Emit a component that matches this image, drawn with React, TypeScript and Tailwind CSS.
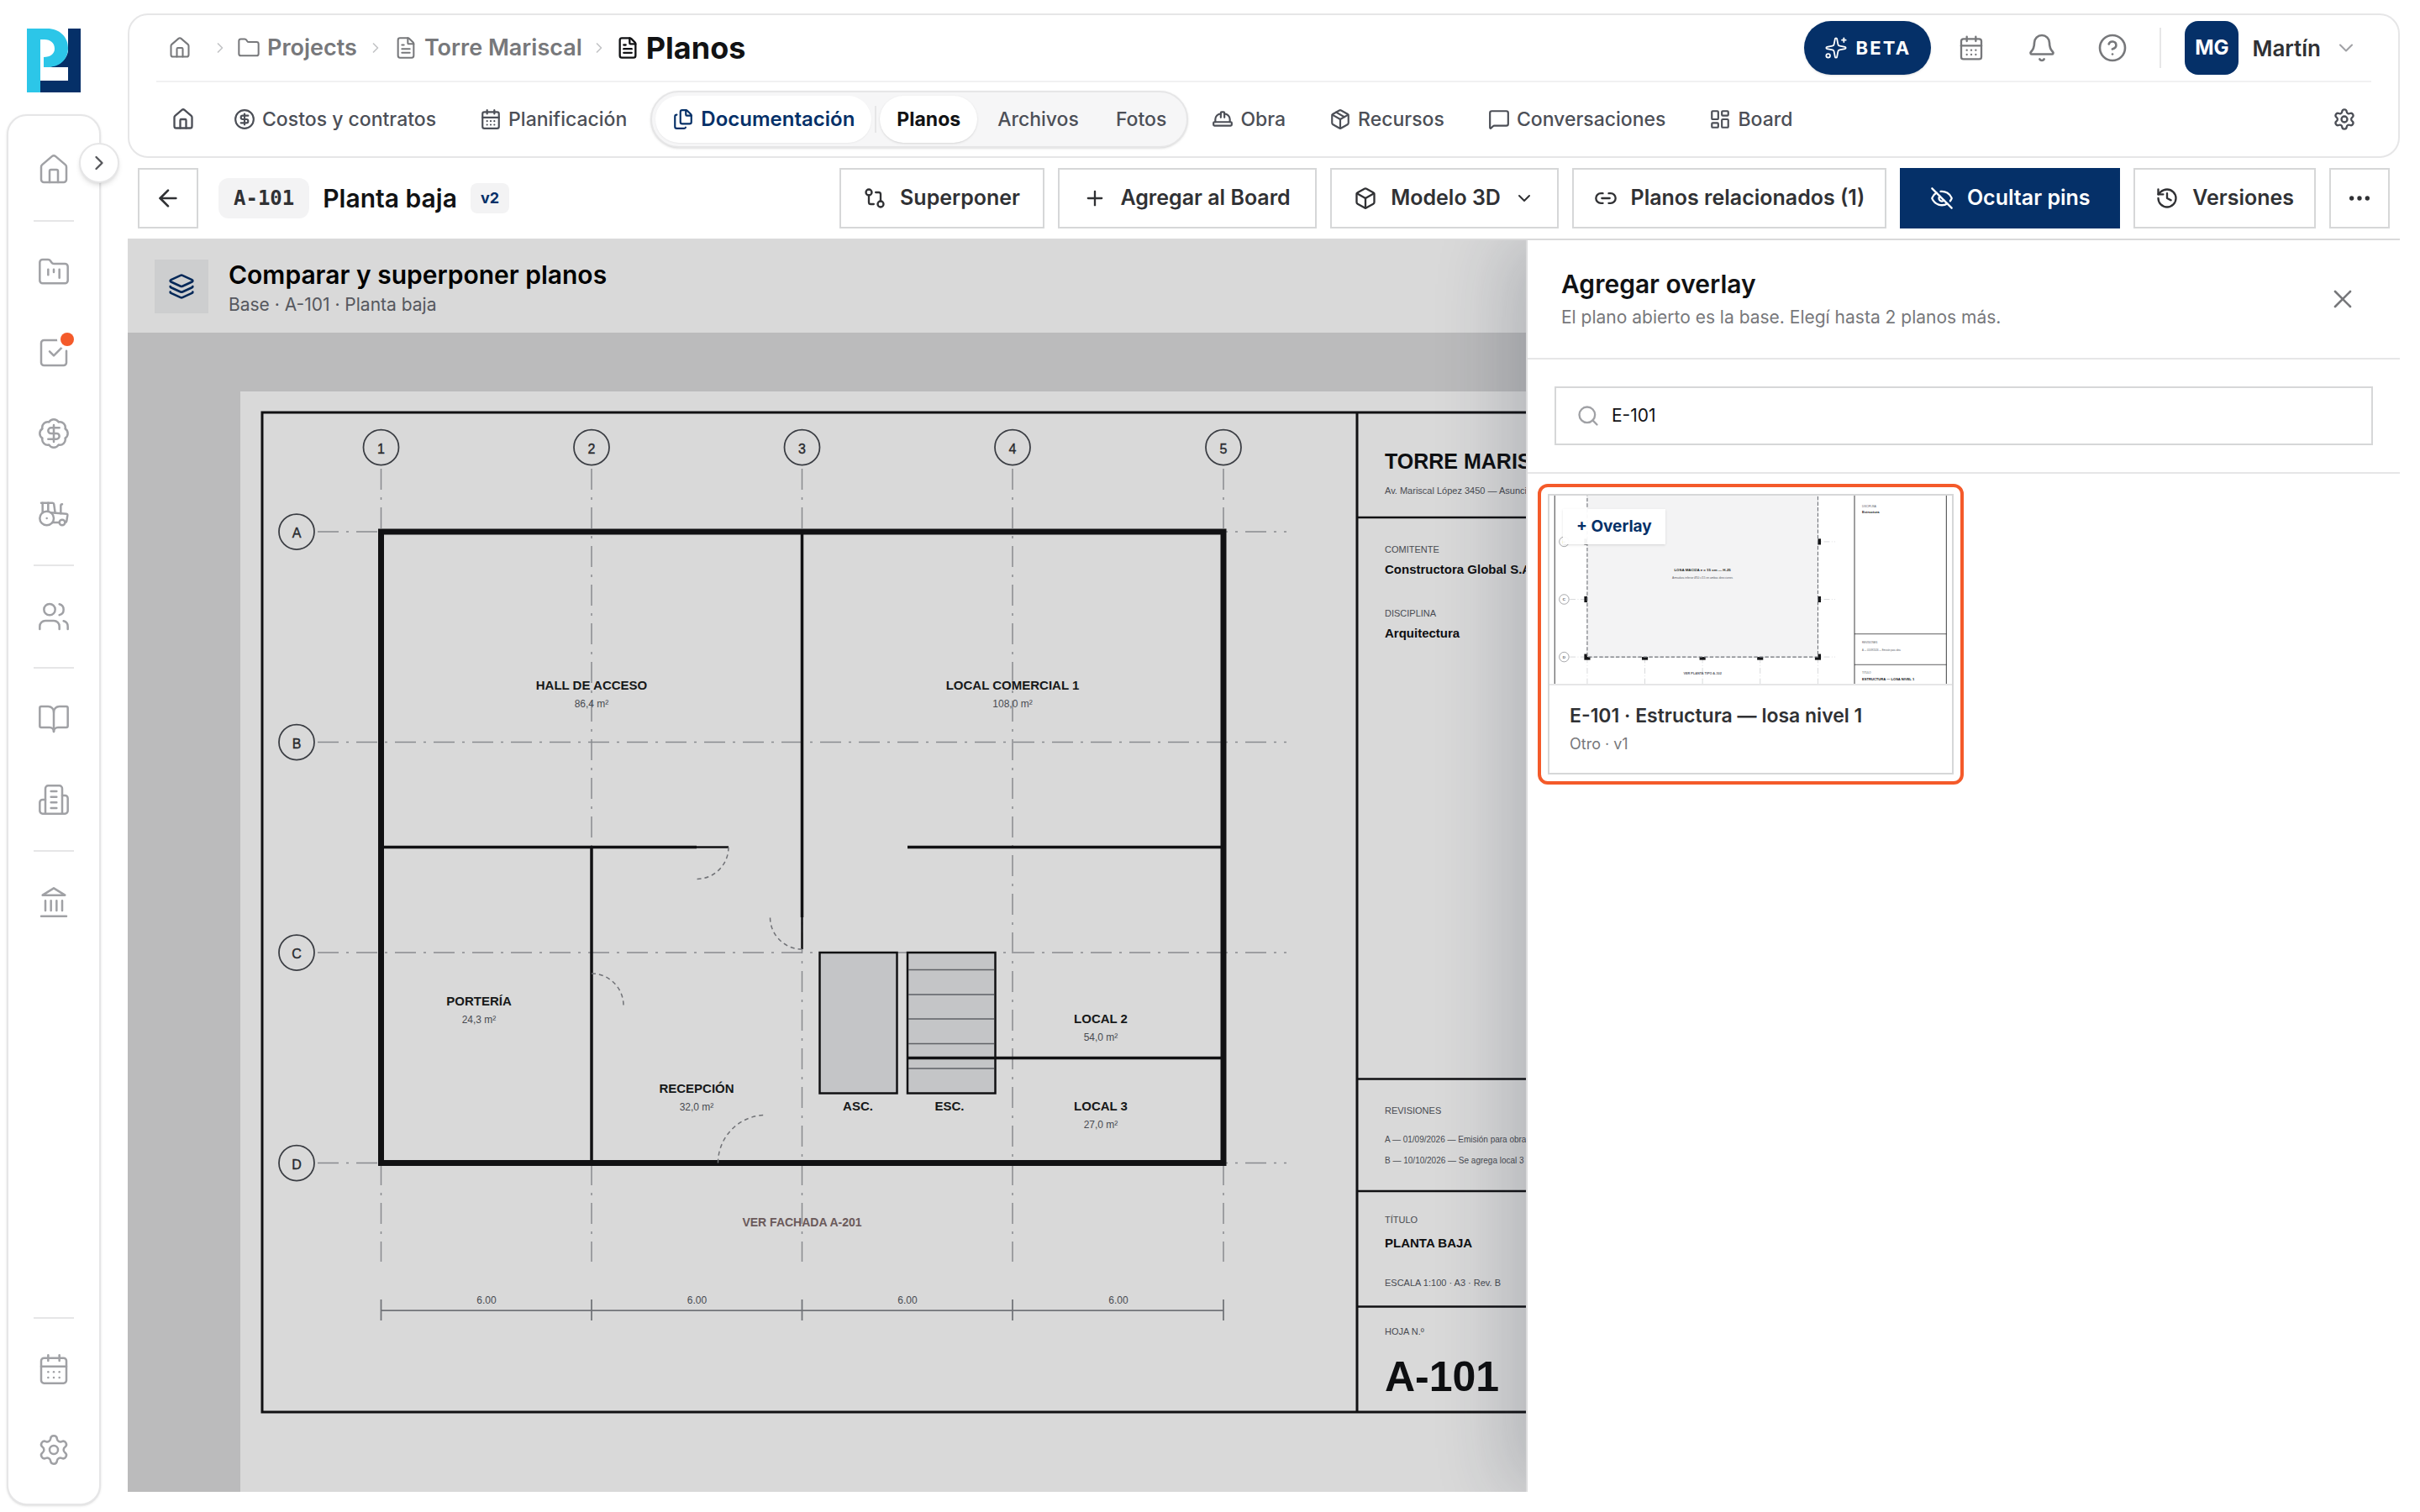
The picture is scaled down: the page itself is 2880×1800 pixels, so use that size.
import type { ComponentType, ReactNode } from "react";
import {
  ArrowLeft,
  BadgeDollarSign,
  Bell,
  BookOpen,
  Box,
  CalendarDays,
  ChevronDown,
  ChevronRight,
  CircleDollarSign,
  CircleQuestionMark,
  Ellipsis,
  EyeOff,
  FileText,
  Files,
  Folder,
  FolderKanban,
  GitCompare,
  HardHat,
  History,
  House,
  Layers,
  LayoutDashboard,
  Link2,
  MessageSquare,
  Package,
  Plus,
  Search,
  Settings,
  Sparkles,
  SquareCheckBig,
  Tractor,
  Users,
  X,
} from "lucide-react";

type IconType = ComponentType<{ className?: string; strokeWidth?: number }>;

/* ---------- Icons that lucide draws differently ---------- */

const BuildingIcon: IconType = ({ className, strokeWidth = 2 }) => (
  <svg className={className} viewBox="0 0 24 24" fill="none" stroke="currentColor" strokeWidth={strokeWidth} strokeLinecap="round" strokeLinejoin="round">
    <path d="M6 22V4a2 2 0 0 1 2-2h8a2 2 0 0 1 2 2v18Z" />
    <path d="M6 12H4a2 2 0 0 0-2 2v6a2 2 0 0 0 2 2h2" />
    <path d="M18 9h2a2 2 0 0 1 2 2v9a2 2 0 0 1-2 2h-2" />
    <path d="M10 6h4M10 10h4M10 14h4M10 18h4" />
  </svg>
);

const BankIcon: IconType = ({ className, strokeWidth = 2 }) => (
  <svg className={className} viewBox="0 0 24 24" fill="none" stroke="currentColor" strokeWidth={strokeWidth} strokeLinecap="round" strokeLinejoin="round">
    <path d="M3 22h18M6 18v-7M10 18v-7M14 18v-7M18 18v-7" />
    <path d="m12 2 8 5H4z" />
  </svg>
);

const Logo = () => (
  <svg className="h-19 w-16" viewBox="0 0 64 76">
    <path fill="#053068" d="M49 0h15v76H16V62h33V46H26C38 44 47 38 49 27z" />
    <path fill="#2cc6e8" d="M0 0h24c15 0 25 10 25 23 0 14-10 23-25 23h-4V34c8 0 13-4 13-10 0-7-5-11-12-11h-5v63H0z" />
  </svg>
);

/* ---------- Sidebar ---------- */

const sidebarGroups: { icon: IconType; label: string; badge?: boolean }[][] = [
  [{ icon: House, label: "Inicio" }],
  [
    { icon: FolderKanban, label: "Proyectos" },
    { icon: SquareCheckBig, label: "Tareas", badge: true },
    { icon: BadgeDollarSign, label: "Costos" },
    { icon: Tractor, label: "Equipos" },
  ],
  [{ icon: Users, label: "Contactos" }],
  [
    { icon: BookOpen, label: "Catálogo" },
    { icon: BuildingIcon, label: "Empresa" },
  ],
  [{ icon: BankIcon, label: "Bancos" }],
];

const SidebarItem = ({ icon: Icon, label, badge }: { icon: IconType; label: string; badge?: boolean }) => (
  <a href="#" aria-label={label} className="flex h-22 w-22 items-center justify-center text-[#a0a1a5]">
    <span className="relative">
      <Icon className="h-10 w-10" strokeWidth={1.5} />
      {badge && <span className="absolute -top-1 -right-1 h-4 w-4 rounded-full bg-[#f45a2a] ring-4 ring-white" />}
    </span>
  </a>
);

const SidebarDivider = () => <div className="my-2 h-0.5 w-12 bg-[#e6e6e7]" />;

const Sidebar = () => (
  <div className="flex w-30 shrink-0 flex-col pb-2 pl-2">
    <a href="#" aria-label="Inicio" className="flex h-34 items-center pt-2 pl-6">
      <Logo />
    </a>
    <aside className="relative flex flex-1 flex-col items-center gap-2 rounded-3xl border-2 border-[#e6e6e7] bg-white py-5 shadow-sm">
      {sidebarGroups.map((group, i) => (
        <div key={i} className="flex flex-col items-center gap-2">
          {i > 0 && <SidebarDivider />}
          {group.map((item) => (
            <SidebarItem key={item.label} {...item} />
          ))}
        </div>
      ))}
      <div className="mt-auto flex flex-col items-center gap-2">
        <SidebarDivider />
        <SidebarItem icon={CalendarDays} label="Calendario" />
        <SidebarItem icon={Settings} label="Configuración" />
      </div>
      <button
        type="button"
        aria-label="Expandir menú"
        className="absolute top-8 -right-6 flex h-12 w-12 items-center justify-center rounded-full border-2 border-[#e6e6e7] bg-white text-[#55565a] shadow-md"
      >
        <ChevronRight className="h-7 w-7" strokeWidth={2} />
      </button>
    </aside>
  </div>
);

/* ---------- Header ---------- */

const Breadcrumbs = () => (
  <nav aria-label="Ruta" className="flex items-center text-[27px] font-semibold text-[#77787b]">
    <a href="#" aria-label="Inicio" className="pr-6 pl-3.5">
      <House className="h-7 w-7" strokeWidth={1.75} />
    </a>
    <ChevronRight className="h-5 w-5 text-[#c3c4c6]" />
    <a href="#" className="ml-2.5 flex items-center gap-2">
      <Folder className="h-7 w-7" strokeWidth={1.75} />
      Projects
    </a>
    <ChevronRight className="mx-3 h-5 w-5 text-[#c3c4c6]" />
    <a href="#" className="flex items-center gap-2">
      <FileText className="h-7 w-7" strokeWidth={1.75} />
      Torre Mariscal
    </a>
    <ChevronRight className="mx-2.5 h-5 w-5 text-[#c3c4c6]" />
    <h1 className="flex items-center gap-2 text-4xl font-bold text-[#111214]">
      <FileText className="h-7 w-7" strokeWidth={2} />
      Planos
    </h1>
  </nav>
);

const HeaderActions = () => (
  <div className="flex items-center">
    <button type="button" className="mr-3 flex h-16 items-center gap-2.5 rounded-full bg-[#053068] px-6 text-[22px] font-bold tracking-widest text-white shadow-sm">
      <Sparkles className="h-7 w-7" strokeWidth={1.5} />
      BETA
    </button>
    <div className="flex gap-3 text-[#77787b]">
      <button type="button" aria-label="Calendario" className="flex h-18 w-18 items-center justify-center">
        <CalendarDays className="h-8 w-8" strokeWidth={1.75} />
      </button>
      <button type="button" aria-label="Notificaciones" className="flex h-18 w-18 items-center justify-center">
        <Bell className="h-9 w-9" strokeWidth={1.75} />
      </button>
      <button type="button" aria-label="Ayuda" className="flex h-18 w-18 items-center justify-center">
        <CircleQuestionMark className="h-9 w-9" strokeWidth={1.75} />
      </button>
    </div>
    <div className="mx-5 h-12 w-0.5 bg-[#e6e6e7]" />
    <button type="button" className="flex items-center gap-4 px-2 pr-4 text-[26px] font-semibold text-[#303134]">
      <span className="flex h-16 w-16 items-center justify-center rounded-2xl bg-[#053068] text-2xl font-bold text-white">MG</span>
      Martín
      <ChevronDown className="h-7 w-7 text-[#a0a1a5]" strokeWidth={1.75} />
    </button>
  </div>
);

const NavLink = ({ icon: Icon, children }: { icon: IconType; children: ReactNode }) => (
  <a href="#" className="flex h-14 items-center gap-2 px-6">
    <Icon className="h-[26px] w-[26px]" strokeWidth={2} />
    {children}
  </a>
);

const ProjectNav = () => (
  <nav aria-label="Proyecto" className="flex h-[88px] items-center text-[23px] font-medium text-[#4c4f57]">
    <div className="flex flex-1 items-center gap-1">
      <a href="#" aria-label="Resumen" className="px-[18px]">
        <House className="h-7 w-7" strokeWidth={2} />
      </a>
      <NavLink icon={CircleDollarSign}>Costos y contratos</NavLink>
      <NavLink icon={CalendarDays}>Planificación</NavLink>
      <div className="flex items-center gap-1 rounded-full border-2 border-[#e6e6e7] bg-[#f6f6f7] p-1 shadow-sm">
        <a href="#" className="flex h-14 items-center gap-2 rounded-full bg-white px-5 text-2xl font-semibold text-[#053068] shadow-xs">
          <Files className="h-[26px] w-[26px]" strokeWidth={2} />
          Documentación
        </a>
        <div className="h-8 w-0.5 bg-[#e6e6e7]" />
        <a href="#" className="flex h-14 items-center rounded-full bg-white px-5 font-bold text-[#111214] shadow-sm">Planos</a>
        <a href="#" className="flex h-14 items-center px-5">Archivos</a>
        <a href="#" className="flex h-14 items-center px-5">Fotos</a>
      </div>
      <NavLink icon={HardHat}>Obra</NavLink>
      <NavLink icon={Package}>Recursos</NavLink>
      <NavLink icon={MessageSquare}>Conversaciones</NavLink>
      <NavLink icon={LayoutDashboard}>Board</NavLink>
    </div>
    <a href="#" aria-label="Ajustes del proyecto" className="px-[18px]">
      <Settings className="h-7 w-7" strokeWidth={2} />
    </a>
  </nav>
);

const Header = () => (
  <header className="rounded-3xl border-2 border-[#e6e6e7] bg-white px-8">
    <div className="flex h-20 items-center justify-between border-b-2 border-[#f1f1f2]">
      <Breadcrumbs />
      <HeaderActions />
    </div>
    <ProjectNav />
  </header>
);

/* ---------- Toolbar ---------- */

const ToolButton = ({
  icon: Icon,
  children,
  menu,
  active,
  width = "",
}: {
  icon: IconType;
  children: ReactNode;
  menu?: boolean;
  active?: boolean;
  width?: string;
}) => (
  <button
    type="button"
    className={`flex h-18 items-center justify-center gap-4 border-2 text-[25px] font-semibold ${width} ${
      active ? "border-[#053068] bg-[#053068] px-8 text-white" : "border-[#d6d7d8] bg-white px-6 text-[#303134]"
    }`}
  >
    <Icon className="h-7 w-7" strokeWidth={2} />
    {children}
    {menu && <ChevronDown className="h-6 w-6" strokeWidth={2} />}
  </button>
);

const Toolbar = () => (
  <div className="flex items-center border-b-2 border-[#d9d9da] p-3">
    <button type="button" aria-label="Volver" className="flex h-18 w-18 items-center justify-center border-2 border-[#d6d7d8] text-[#303134]">
      <ArrowLeft className="h-8 w-8" strokeWidth={2} />
    </button>
    <span className="ml-6 flex h-12 items-center rounded-xl bg-[#f3f3f4] px-[18px] font-['DejaVu_Sans_Mono',monospace] text-2xl font-bold text-[#303134]">A-101</span>
    <h2 className="ml-4 text-3xl font-semibold text-[#111214]">Planta baja</h2>
    <span className="ml-4 flex h-9 items-center rounded-lg bg-[#f3f3f4] px-3 text-lg font-bold text-[#053068]">v2</span>
    <div className="ml-auto flex gap-4">
      <ToolButton icon={GitCompare} width="min-w-[244px]">Superponer</ToolButton>
      <ToolButton icon={Plus} width="min-w-[308px]">Agregar al Board</ToolButton>
      <ToolButton icon={Box} width="min-w-[272px]" menu>Modelo 3D</ToolButton>
      <ToolButton icon={Link2}>Planos relacionados (1)</ToolButton>
      <ToolButton icon={EyeOff} width="min-w-[262px]" active>Ocultar pins</ToolButton>
      <ToolButton icon={History}>Versiones</ToolButton>
      <button type="button" aria-label="Más opciones" className="flex h-18 w-18 items-center justify-center border-2 border-[#d6d7d8] text-[#303134]">
        <Ellipsis className="h-8 w-8" strokeWidth={2} />
      </button>
    </div>
  </div>
);

/* ---------- Drawing sheets ---------- */

const columns = [453.5, 704, 954.5, 1205, 1456];
const rows = [633, 883.5, 1134, 1384.5];
const rowNames = ["A", "B", "C", "D"];

type SheetInfo = { discipline: string; title: string; code: string; revisions: string[]; rev: string };

const SheetFrame = ({ info }: { info: SheetInfo }) => (
  <>
    <g stroke="#a2a4a9" strokeWidth={1.5} strokeDasharray="25 9 3 9">
      {columns.map((x) => (
        <line key={x} x1={x} y1={558} x2={x} y2={1502} />
      ))}
      {rows.map((y) => (
        <line key={y} x1={378} y1={y} x2={1531} y2={y} />
      ))}
    </g>
    <g fill="#fff" stroke="#45484f" strokeWidth={1.75}>
      {columns.map((x) => (
        <circle key={x} cx={x} cy={532.5} r={21} />
      ))}
      {rows.map((y) => (
        <circle key={y} cx={353} cy={y} r={21} />
      ))}
    </g>
    <g fontSize={16} fill="#303237" stroke="#303237" strokeWidth={0.4} textAnchor="middle">
      {columns.map((x, i) => (
        <text key={x} x={x} y={540}>{i + 1}</text>
      ))}
      {rows.map((y, i) => (
        <text key={y} x={353} y={y + 7}>{rowNames[i]}</text>
      ))}
    </g>
    <g fill="none" stroke="#141517" strokeWidth={3}>
      <rect x={312} y={491} width={1702} height={1190} />
      <path d="M1615 491v1190" />
      <path strokeWidth={2.5} d="M1615 616h399M1615 1284.5h399M1615 1418h399M1615 1555.5h399" />
    </g>
    <g fill="#55585f" fontSize={11}>
      <text x={1648} y={588}>Av. Mariscal López 3450 — Asunción</text>
      <text x={1648} y={658}>COMITENTE</text>
      <text x={1648} y={734}>DISCIPLINA</text>
      <text x={1648} y={1326}>REVISIONES</text>
      {info.revisions.map((line, i) => (
        <text key={line} x={1648} y={1360 + i * 25} fontSize={10}>{line}</text>
      ))}
      <text x={1648} y={1456}>TÍTULO</text>
      <text x={1648} y={1531}>ESCALA 1:100 · A3 · Rev. {info.rev}</text>
      <text x={1648} y={1589}>HOJA N.º</text>
    </g>
    <g fill="#111214" fontWeight={700} fontSize={15}>
      <text x={1648} y={558} fontSize={25}>TORRE MARISCAL</text>
      <text x={1648} y={683}>Constructora Global S.A.</text>
      <text x={1648} y={759}>{info.discipline}</text>
      <text x={1648} y={1485}>{info.title}</text>
      <text x={1648} y={1656} fontSize={50}>{info.code}</text>
    </g>
  </>
);

const rooms = [
  { name: "HALL DE ACCESO", area: "86,4 m²", x: 704, y: 821 },
  { name: "LOCAL COMERCIAL 1", area: "108,0 m²", x: 1205, y: 821 },
  { name: "PORTERÍA", area: "24,3 m²", x: 570, y: 1197 },
  { name: "RECEPCIÓN", area: "32,0 m²", x: 829, y: 1301 },
  { name: "LOCAL 2", area: "54,0 m²", x: 1310, y: 1218 },
  { name: "LOCAL 3", area: "27,0 m²", x: 1310, y: 1322 },
];

const FloorPlan = () => (
  <svg
    className="h-[1310px] w-[1754px] max-w-none bg-white font-['Liberation_Sans',Arial,sans-serif]"
    viewBox="286 466 1754 1310"
    role="img"
    aria-label="Plano A-101 Planta baja"
  >
    <SheetFrame
      info={{
        discipline: "Arquitectura",
        title: "PLANTA BAJA",
        code: "A-101",
        revisions: ["A — 01/09/2026 — Emisión para obra", "B — 10/10/2026 — Se agrega local 3"],
        rev: "B",
      }}
    />
    {/* Lift and stairs */}
    <g fill="#e7e8ea" stroke="#141517" strokeWidth={2.5}>
      <rect x={975.5} y={1134} width={92} height={167.5} />
      <rect x={1080} y={1134} width={104.5} height={167.5} />
    </g>
    <path stroke="#6f7278" strokeWidth={1.5} d="M1081 1154.5h102M1081 1184h102M1081 1213h102M1081 1242.5h102M1081 1272h102" />
    {/* Walls */}
    <g fill="none" stroke="#141517">
      <rect x={453.5} y={633} width={1002.5} height={751.5} strokeWidth={7} />
      <path strokeWidth={3.5} d="M453.5 1008.5H829M704 1008.5v376M954.5 633v459M1080 1008.5h376M1080 1259.5h376" />
      <path strokeWidth={2.5} d="M829 1008.5h38M954.5 1092v38" />
    </g>
    {/* Doors */}
    <g fill="none" stroke="#85878c" strokeWidth={1.5} strokeDasharray="5 4">
      <path d="M867 1008.5a38 38 0 0 1-38 38" />
      <path d="M954.5 1130a38 38 0 0 1-38-38" />
      <path d="M704 1159a38 38 0 0 1 38 38" />
      <path d="M854.5 1384.5a57 57 0 0 1 57-57" />
    </g>
    <g textAnchor="middle" fontSize={15} fontWeight={700} fill="#1b1d20">
      {rooms.map((room) => (
        <g key={room.name}>
          <text x={room.x} y={room.y}>{room.name}</text>
          <text x={room.x} y={room.y + 21} fontSize={12} fontWeight={400} fill="#55585f">{room.area}</text>
        </g>
      ))}
      <text x={1021} y={1322}>ASC.</text>
      <text x={1130} y={1322}>ESC.</text>
      <text x={954.5} y={1460} fontSize={14} fill="#7d6a6b">VER FACHADA A-201</text>
    </g>
    {/* Dimensions */}
    <path fill="none" stroke="#85888d" strokeWidth={1.75} d="M453.5 1560H1456M453.5 1547v25M704 1547v25M954.5 1547v25M1205 1547v25M1456 1547v25" />
    <g textAnchor="middle" fontSize={12} fill="#55585f">
      {columns.slice(1).map((x) => (
        <text key={x} x={x - 125} y={1552}>6.00</text>
      ))}
    </g>
  </svg>
);

const SlabThumbnail = () => (
  <svg
    className="block h-full w-full bg-white font-['Liberation_Sans',Arial,sans-serif]"
    viewBox="287 683 1754 818"
    preserveAspectRatio="xMidYMid slice"
    role="img"
    aria-label="Plano E-101"
  >
    <SheetFrame
      info={{
        discipline: "Estructura",
        title: "ESTRUCTURA — LOSA NIVEL 1",
        code: "E-101",
        revisions: ["A — 01/09/2026 — Emisión para obra"],
        rev: "A",
      }}
    />
    <g fill="#141517">
      {columns.flatMap((x) => rows.map((y) => <rect key={`${x}-${y}`} x={x - 13} y={y - 13} width={26} height={26} />))}
    </g>
    <rect x={453.5} y={633} width={1002.5} height={751.5} fill="#f3f3f4" stroke="#6f7278" strokeWidth={4} strokeDasharray="16 8" />
    <g textAnchor="middle" fontWeight={700} fontSize={16} fill="#1b1d20">
      <text x={954.5} y={1012}>LOSA MACIZA e = 15 cm — H-25</text>
      <text x={954.5} y={1043} fontSize={12} fontWeight={400} fill="#55585f">Armadura inferior Ø10 c/15 en ambas direcciones</text>
      <text x={954.5} y={1460} fontSize={14} fill="#55585f">VER PLANTA TIPO A-102</text>
    </g>
  </svg>
);

/* ---------- Workspace ---------- */

const CompareView = () => (
  <section className="relative flex min-w-0 flex-1 flex-col overflow-hidden bg-[#dcdcdd]">
    <div className="flex h-28 shrink-0 items-center gap-6 border-b-2 border-[#dcdcdd] bg-white px-8">
      <span className="flex h-16 w-16 items-center justify-center bg-[#f1f2f4] text-[#053068]">
        <Layers className="h-8 w-8" strokeWidth={2} />
      </span>
      <div className="pt-1">
        <h2 className="text-3xl leading-10 font-semibold text-black">Comparar y superponer planos</h2>
        <p className="text-[21px] leading-8 text-[#65686f]">Base · A-101 · Planta baja</p>
      </div>
    </div>
    <div className="min-h-0 flex-1 overflow-hidden pt-17 pl-[134px]">
      <FloorPlan />
    </div>
    <div className="absolute inset-0 bg-black/15" />
  </section>
);

const OverlayPanel = () => (
  <aside className="relative flex w-[1040px] shrink-0 flex-col border-l-2 border-[#dcdcdd] bg-white shadow-[-24px_0_80px_rgba(30,41,59,0.2)]">
    <div className="flex items-start justify-between border-b-2 border-[#e6e6e7] px-10 pt-8 pb-8">
      <div>
        <h2 className="text-3xl leading-10 font-semibold text-[#111214]">Agregar overlay</h2>
        <p className="mt-1 text-[21px] leading-8 text-[#77787b]">El plano abierto es la base. Elegí hasta 2 planos más.</p>
      </div>
      <button type="button" aria-label="Cerrar" className="mr-2.5 self-center text-[#77787b]">
        <X className="h-9 w-9" strokeWidth={1.75} />
      </button>
    </div>
    <div className="border-b-2 border-[#e6e6e7] p-8">
      <label className="flex h-[70px] items-center gap-3.5 border-2 border-[#d6d7d8] px-6">
        <Search className="h-7 w-7 text-[#a0a1a5]" strokeWidth={2} />
        <input type="text" aria-label="Buscar planos" defaultValue="E-101" className="flex-1 text-[21px] text-[#111214] outline-none" />
      </label>
    </div>
    <div className="grid grid-cols-2 gap-6 p-6">
      <div className="relative">
        <button type="button" className="flex w-full flex-col border-2 border-[#d6d7d8] text-left">
          <span className="block h-[226px] w-full border-b-2 border-[#e6e6e7]">
            <SlabThumbnail />
          </span>
          <span className="absolute top-[18px] left-[18px] bg-white/95 px-4 py-2 text-[19px] leading-[26px] font-bold text-[#053068] shadow-sm">+ Overlay</span>
          <span className="block px-6 pt-5 pb-4">
            <span className="block text-[23px] leading-8 font-semibold text-[#303134]">E-101 · Estructura — losa nivel 1</span>
            <span className="block text-lg leading-9 text-[#77787b]">Otro · v1</span>
          </span>
        </button>
        <div className="pointer-events-none absolute -inset-3 rounded-xl border-4 border-[#f45a2a]" />
      </div>
    </div>
  </aside>
);

export default function App() {
  return (
    <div className="flex min-h-screen bg-white font-['Inter',sans-serif]">
      <Sidebar />
      <main className="flex min-w-0 flex-1 flex-col pt-4 pr-6 pb-6 pl-8">
        <Header />
        <Toolbar />
        <div className="flex h-0 flex-1 overflow-hidden">
          <CompareView />
          <OverlayPanel />
        </div>
      </main>
    </div>
  );
}
